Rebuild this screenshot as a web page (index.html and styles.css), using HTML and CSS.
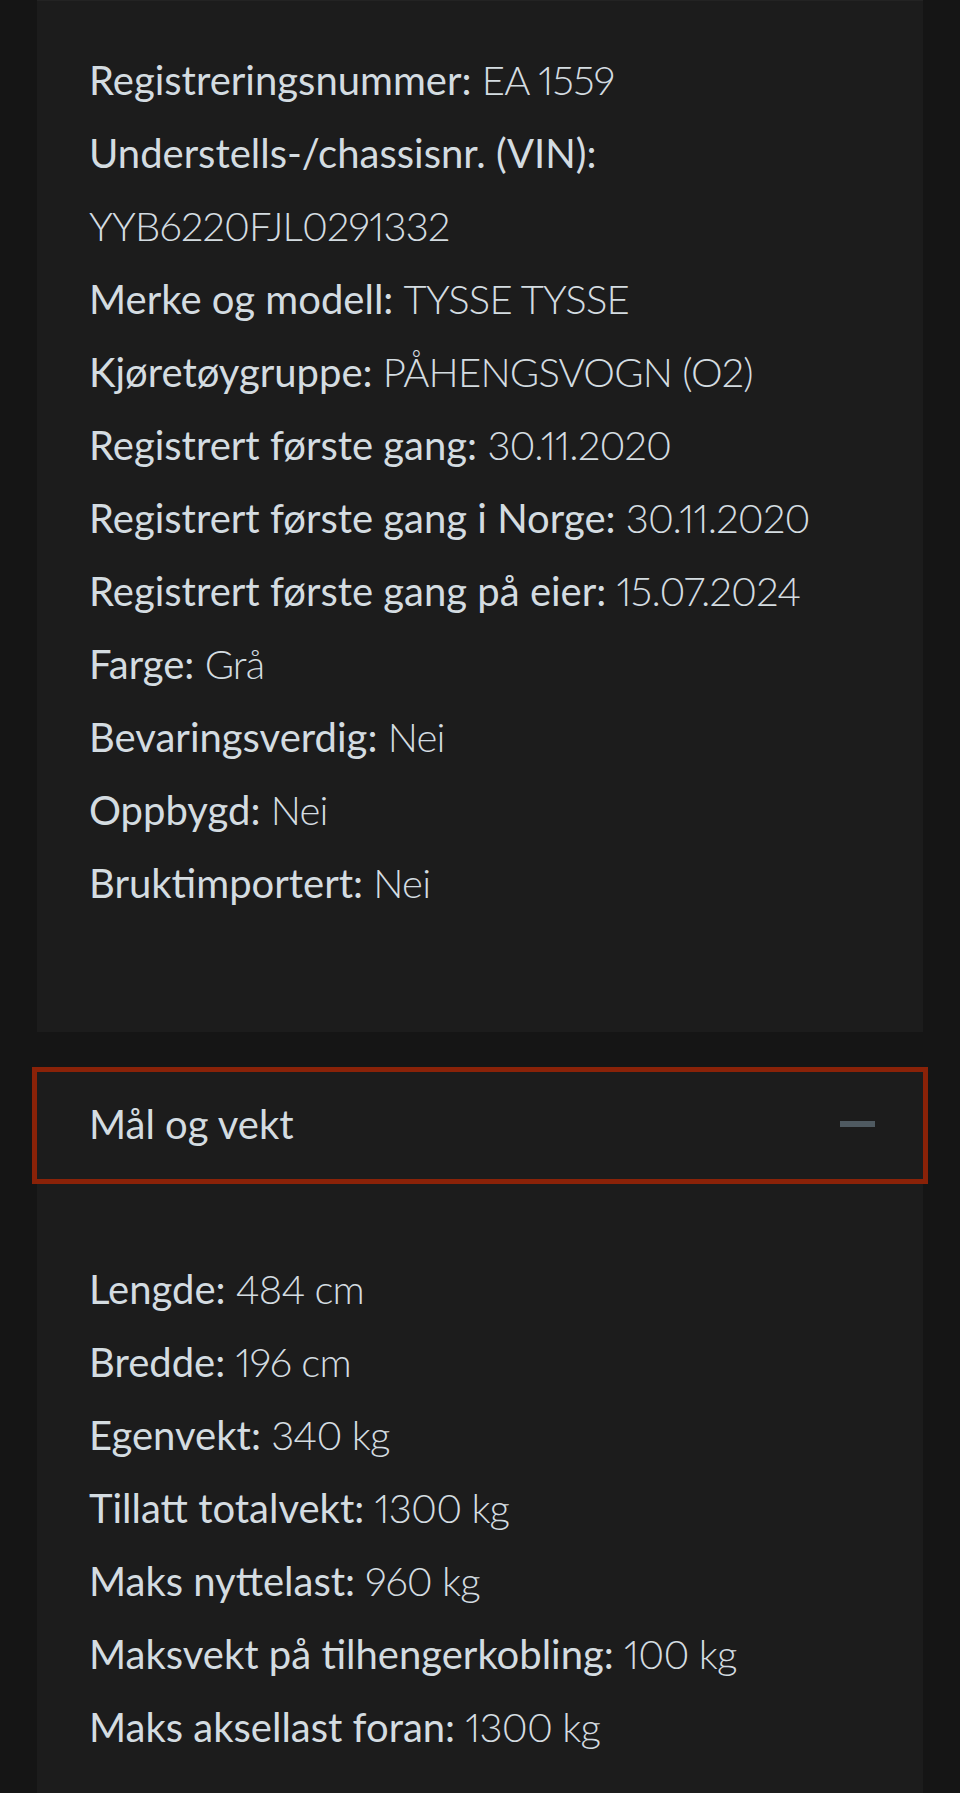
FILE: index.html
```html
<!DOCTYPE html>
<html lang="no">
<head>
<meta charset="utf-8">
<title>Kjøretøyinformasjon</title>
<link rel="stylesheet" href="styles.css">
</head>
<body>
<main class="page">
  <section class="card card--details">
    <p class="row"><span class="label">Registreringsnummer:</span> <span class="value">EA 1559</span></p>
    <p class="row row--stacked"><span class="label">Understells-/chassisnr. (VIN):</span> <span class="value">YYB6220FJL0291332</span></p>
    <p class="row"><span class="label">Merke og modell:</span> <span class="value">TYSSE TYSSE</span></p>
    <p class="row"><span class="label">Kjøretøygruppe:</span> <span class="value">PÅHENGSVOGN (O2)</span></p>
    <p class="row"><span class="label">Registrert første gang:</span> <span class="value">30.11.2020</span></p>
    <p class="row"><span class="label">Registrert første gang i Norge:</span> <span class="value">30.11.2020</span></p>
    <p class="row"><span class="label">Registrert første gang på eier:</span> <span class="value">15.07.2024</span></p>
    <p class="row"><span class="label">Farge:</span> <span class="value">Grå</span></p>
    <p class="row"><span class="label">Bevaringsverdig:</span> <span class="value">Nei</span></p>
    <p class="row"><span class="label">Oppbygd:</span> <span class="value">Nei</span></p>
    <p class="row"><span class="label">Bruktimportert:</span> <span class="value">Nei</span></p>
  </section>

  <section class="panel">
    <button class="panel-header" type="button" aria-expanded="true">
      <span class="panel-title">Mål og vekt</span>
      <span class="minus" aria-hidden="true"></span>
    </button>
    <div class="card card--body">
      <p class="row"><span class="label">Lengde:</span> <span class="value">484 cm</span></p>
      <p class="row"><span class="label">Bredde:</span> <span class="value">196 cm</span></p>
      <p class="row"><span class="label">Egenvekt:</span> <span class="value">340 kg</span></p>
      <p class="row"><span class="label">Tillatt totalvekt:</span> <span class="value">1300 kg</span></p>
      <p class="row"><span class="label">Maks nyttelast:</span> <span class="value">960 kg</span></p>
      <p class="row"><span class="label">Maksvekt på tilhengerkobling:</span> <span class="value">100 kg</span></p>
      <p class="row"><span class="label">Maks aksellast foran:</span> <span class="value">1300 kg</span></p>
    </div>
  </section>
</main>
</body>
</html>
```

FILE: styles.css
```css
html, body {
  margin: 0;
  padding: 0;
  background: #151515;
}

body {
  font-family: Lato, "Noto Sans", "DejaVu Sans", sans-serif;
  color: #d4dce1;
}

.page {
  padding: 0 37px;
  display: flex;
  flex-direction: column;
}

.card {
  background: #1c1c1c;
  padding: 0 52px;
}

.card--details {
  border-top: 1px solid #232323;
  padding-top: 43px;
  padding-bottom: 112px;
}

.row {
  margin: 0;
  font-size: 40px;
  line-height: 73px;
}

.row--stacked .value {
  display: block;
}

.label {
  font-weight: 400;
}

.value {
  font-weight: 300;
  font-variant-numeric: proportional-nums;
  font-feature-settings: "pnum" 1;
  letter-spacing: -0.8px;
}

.panel {
  margin-top: 40px;
  display: flex;
  flex-direction: column;
}

.panel-header {
  position: relative;
  z-index: 1;
  display: flex;
  align-items: center;
  justify-content: space-between;
  height: 107px;
  padding: 0 48px 4px 52px;
  margin: 0;
  border: 0;
  background: #1c1c1c;
  outline: 5px solid #8a2208;
  outline-offset: 0;
  font-family: inherit;
  color: #d4dce1;
  text-align: left;
  cursor: pointer;
}

.panel-title {
  font-size: 40px;
  font-weight: 400;
}

.minus {
  display: block;
  width: 35px;
  height: 6px;
  background: #4f5a61;
}

.card--body {
  padding-top: 74px;
  padding-bottom: 40px;
}
```
